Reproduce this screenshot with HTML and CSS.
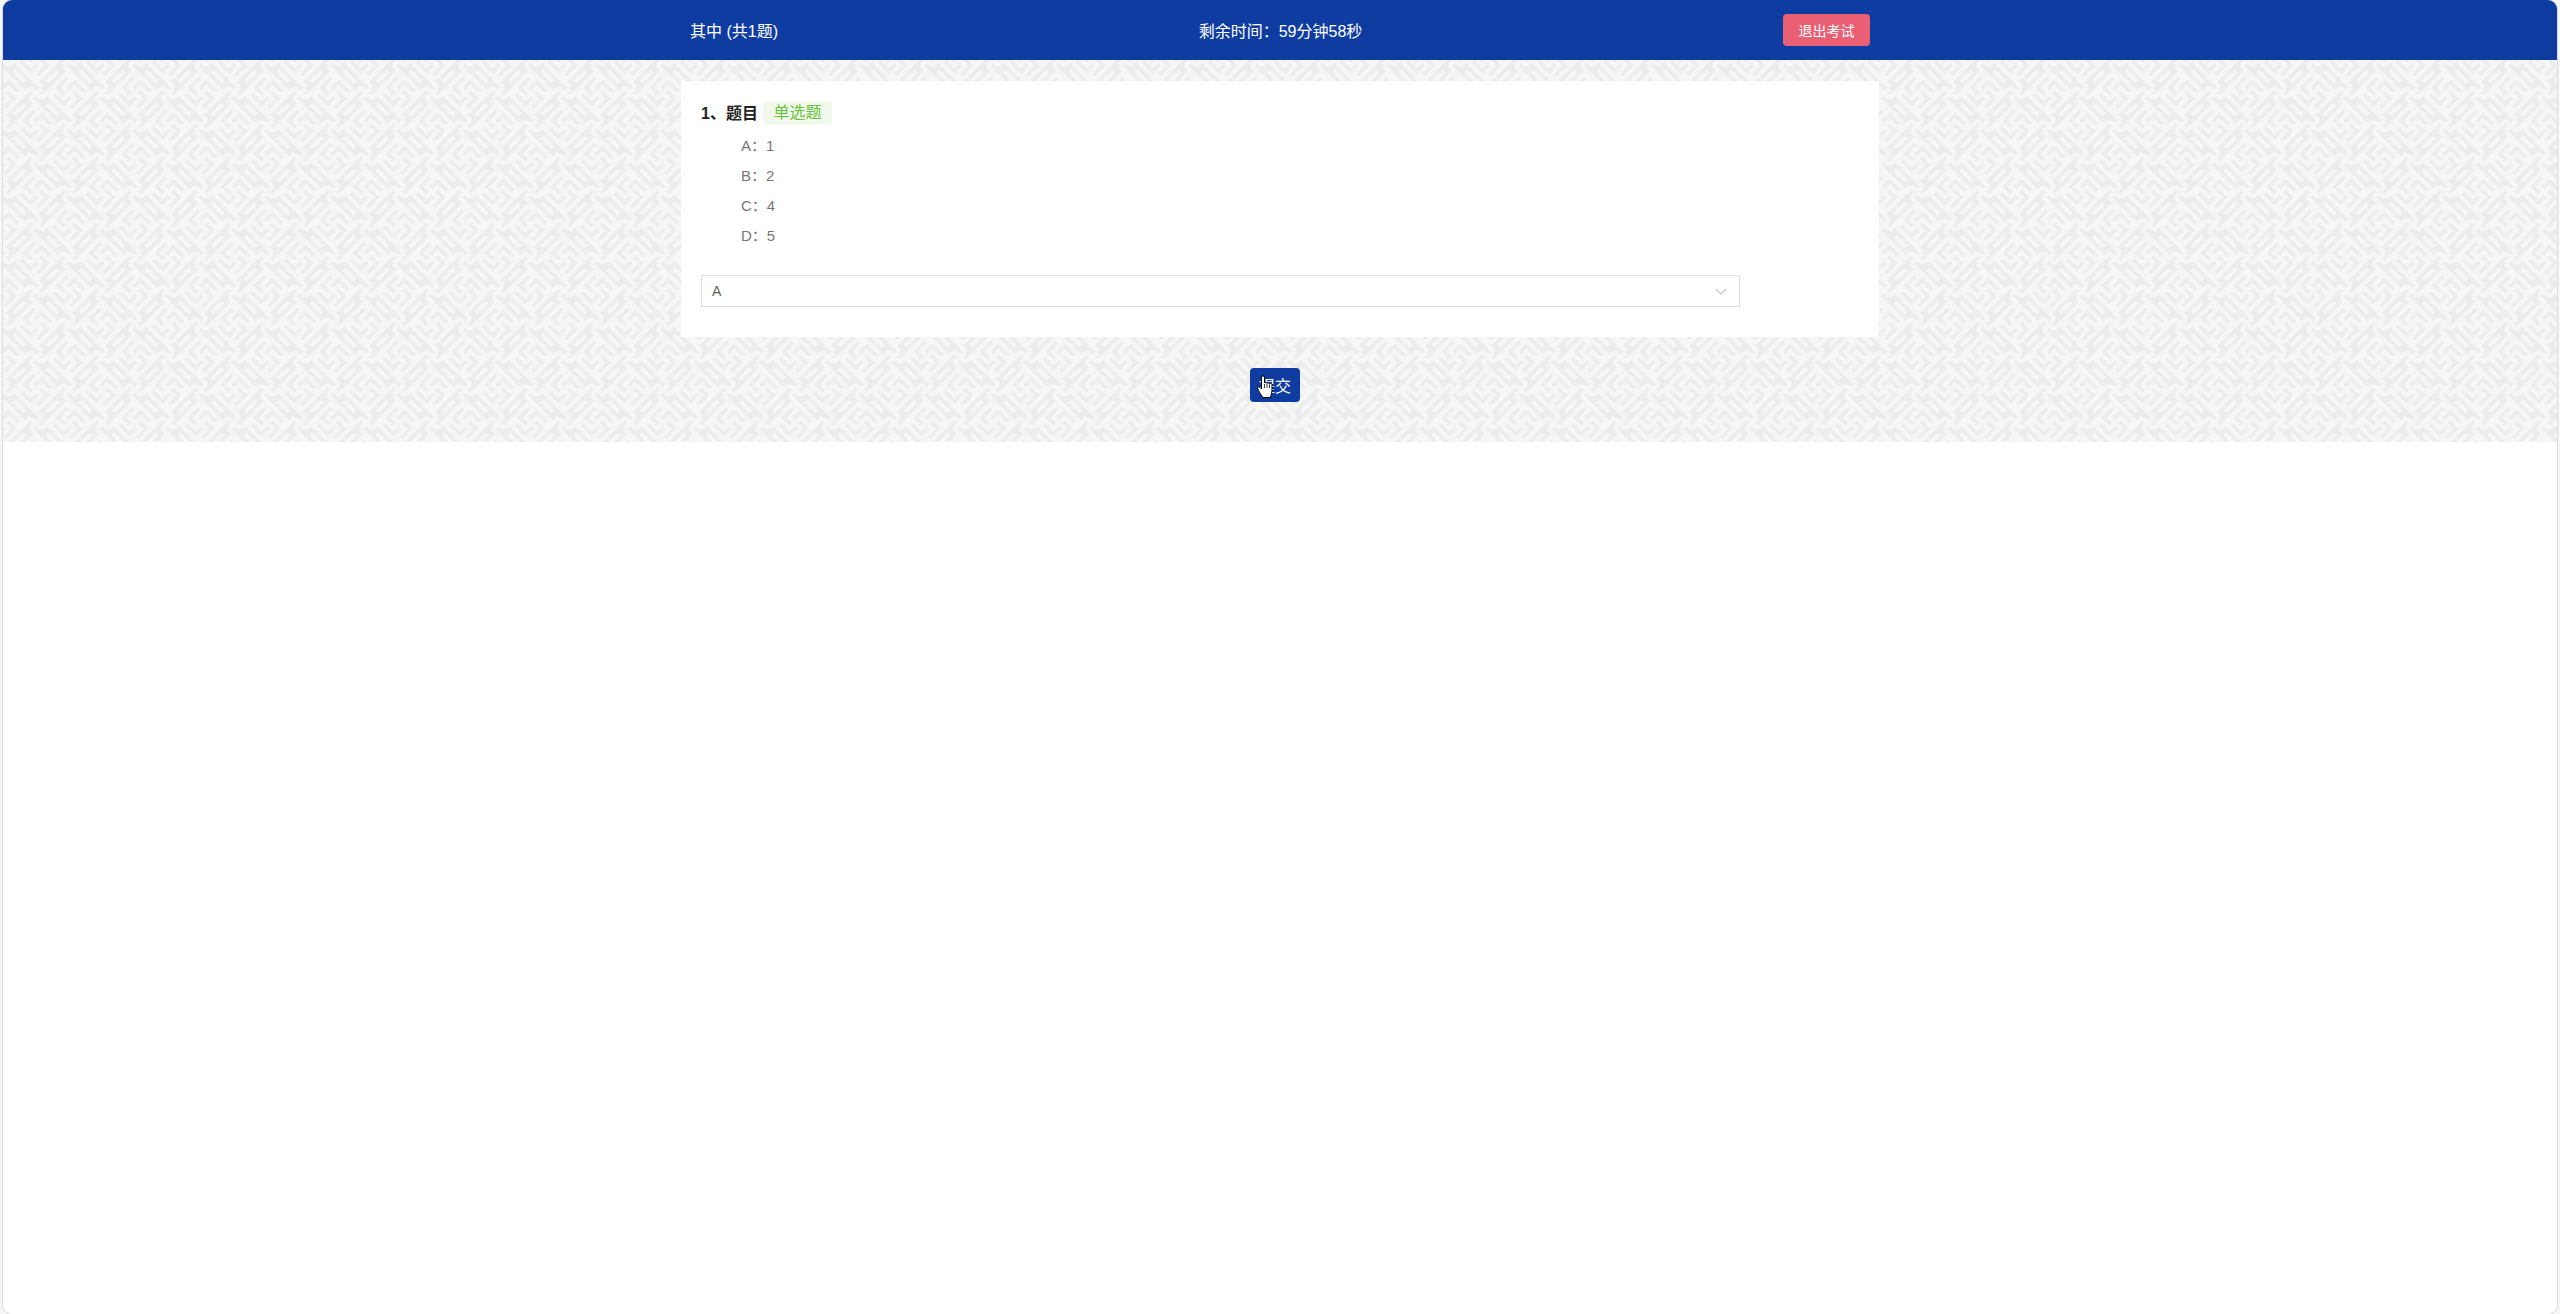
FILE: index.html
```html
<!DOCTYPE html>
<html lang="zh-CN">
<head>
<meta charset="utf-8">
<title>考试</title>
<link rel="stylesheet" href="styles.css">
</head>
<body>
<div class="frame">
  <header class="topbar">
    <div class="topbar-inner">
      <span>其中 (共1题)</span>
      <span>剩余时间：59分钟58秒</span>
      <button class="exit-btn" type="button">退出考试</button>
    </div>
  </header>
  <main class="exam">
    <section class="card">
      <div class="q-title"><span class="q-name">1、题目</span><span class="tag">单选题</span></div>
      <ul class="options">
        <li>A：1</li>
        <li>B：2</li>
        <li>C：4</li>
        <li>D：5</li>
      </ul>
      <div class="select">
        <span>A</span>
        <svg class="chevron" width="12" height="7" viewBox="0 0 12 7" aria-hidden="true"><path d="M1 1l5 5 5-5" fill="none" stroke="#c0c4cc" stroke-width="1.1"/></svg>
      </div>
    </section>
    <div class="actions">
      <button class="submit-btn" type="button">提交
        <svg class="hand" width="17" height="24" viewBox="0 0 17 24" aria-hidden="true"><path d="M4.500 2C4.500.5 7.500.5 7.500 2V8C7.500 7 10 7 10 8.500 10 7.500 12.500 7.500 12.500 9 12.500 8 15 8 15 9.500V15C15 18 14 19.500 13.500 22.500H5.500C5 20.500 3 18.500 1.500 15.500L.5 13C.5 11.500 2.500 11.500 3 12.500L4.500 14Z" fill="#fff" stroke="#000" stroke-width="1"/><path d="M7.500 9V13M10 9V13M12.500 9.500V13" stroke="#000" stroke-width=".8" fill="none"/></svg>
      </button>
    </div>
  </main>
</div>
</body>
</html>
```

FILE: styles.css
```css
* { box-sizing: border-box; }
html, body { margin: 0; height: 100%; }
body {
  background: #f6f6f6;
  padding: 0 3px;
  font-family: "Liberation Sans", "Noto Sans CJK SC", sans-serif;
  overflow: hidden;
}
.frame {
  height: 1314px;
  background: #fff;
  border-radius: 9px;
  box-shadow: -1px 0 0 #dcdcdc, 1px 0 0 #dcdcdc, 0 1px 0 #dcdcdc;
  overflow: hidden;
}
.topbar {
  height: 60px;
  background: #0f3ca1;
  color: #fff;
  font-size: 16px;
  display: flex;
  justify-content: center;
}
.topbar-inner {
  width: 1198px;
  padding: 0 9px;
  display: flex;
  align-items: center;
  justify-content: space-between;
}
.exit-btn {
  width: 87px;
  height: 32px;
  padding: 0;
  border: 0;
  border-radius: 4px;
  background: #ea5f74;
  color: #fff;
  font: inherit;
  font-size: 14px;
}
.exam {
  height: 382px;
  padding-top: 21px;
  display: flex;
  flex-direction: column;
  align-items: center;
  background-color: #ececec;
  background-image: url("data:image/svg+xml,%3Csvg xmlns='http://www.w3.org/2000/svg' width='66' height='66'%3E%3Cdefs%3E%3Cpattern id='f' width='12' height='12' patternUnits='userSpaceOnUse' patternTransform='rotate(45) scale(3.889)'%3E%3Cpath d='M6 6V4H9V2H0V0M6 6H8V9H10V0H12M6 6V8H3V10H12V12M6 6H4V3H2V12H0M12 0V2M10 12H12M0 10V12M2 0H0M12 4V8M0 4V8M4 0H8M4 12H8' fill='none' stroke='%23f6f6f6' stroke-width='1.1'/%3E%3C/pattern%3E%3C/defs%3E%3Crect width='66' height='66' fill='url(%23f)'/%3E%3C/svg%3E");
  background-size: 66px 66px;
}
.card {
  width: 1198px;
  height: 256px;
  padding: 20px;
  background: #fff;
}
.q-title {
  display: flex;
  align-items: center;
  height: 24px;
  font-size: 16px;
  color: #222;
}
.q-name {
  font-weight: 700;
  margin-top: -2px;
}
.tag {
  margin-left: 5px;
  width: 69px;
  height: 24px;
  line-height: 22px;
  text-align: center;
  color: #67c23a;
  background: #f0f9eb;
  border: 1px solid #f0f9eb;
  border-radius: 4px;
}
.options {
  list-style: none;
  margin: 0;
  padding: 6px 0 0 40px;
  font-size: 15px;
  color: #777;
}
.options li {
  height: 30px;
  line-height: 30px;
}
.select {
  width: 1039px;
  height: 32px;
  margin-top: 24px;
  padding: 0 12px 0 10px;
  display: flex;
  align-items: center;
  justify-content: space-between;
  border: 1px solid #dcdfe6;
  font-size: 14px;
  color: #606266;
}
.actions {
  margin-top: 31px;
  margin-right: 10px;
}
.submit-btn {
  position: relative;
  width: 50px;
  height: 34px;
  padding: 0;
  border: 0;
  border-radius: 4px;
  background: #0f3ca1;
  color: #fff;
  font: inherit;
  font-size: 16px;
}
.hand {
  position: absolute;
  left: 7px;
  top: 7px;
}
```
